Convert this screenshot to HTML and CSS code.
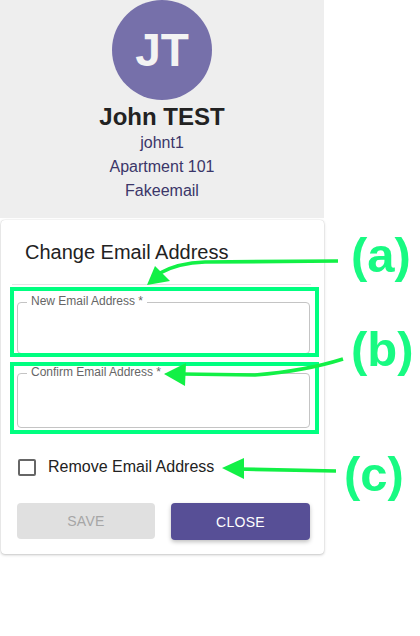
FILE: index.html
```html
<!DOCTYPE html>
<html lang="en">
<head>
<meta charset="utf-8">
<title>Change Email Address</title>
<link rel="stylesheet" href="styles.css">
</head>
<body>
<div class="page">
  <section class="profile">
    <div class="avatar">JT</div>
    <div class="name">John TEST</div>
    <div class="info">johnt1</div>
    <div class="info">Apartment 101</div>
    <div class="info">Fakeemail</div>
  </section>
  <section class="card">
    <h2 class="title">Change Email Address</h2>
    <div class="divider"></div>
    <div class="field field-new">
      <span class="field-label">New Email Address *</span>
    </div>
    <div class="field field-confirm">
      <span class="field-label">Confirm Email Address *</span>
    </div>
    <label class="check-row">
      <span class="checkbox"></span>
      <span class="check-text">Remove Email Address</span>
    </label>
    <div class="actions">
      <button class="btn btn-save" disabled>SAVE</button>
      <button class="btn btn-close">CLOSE</button>
    </div>
  </section>
</div>
<svg class="annotations" width="420" height="636" viewBox="0 0 420 636">
  <rect class="ann-box" x="12" y="289" width="305" height="66"/>
  <rect class="ann-box" x="12" y="364" width="305" height="68"/>
  <path class="ann-line" d="M338 261 L205 262 Q178 263 160 273"/>
  <polygon class="ann-head" points="147,285 155,266 170,281"/>
  <path class="ann-line" d="M343 359 Q305 371 255 375 L182 374"/>
  <polygon class="ann-head" points="164,374 186,363 185,386"/>
  <path class="ann-line" d="M336 471 L238 469"/>
  <polygon class="ann-head" points="222,468 244,458 244,479"/>
  <text class="ann-text" x="351" y="272">(a)</text>
  <text class="ann-text" x="351" y="366">(b)</text>
  <text class="ann-text" x="344" y="491">(c)</text>
</svg>
</body>
</html>
```
FILE: styles.css
```css
html, body {
  margin: 0;
  padding: 0;
  background: #ffffff;
}
body {
  position: relative;
  width: 420px;
  height: 636px;
  overflow: hidden;
  font-family: "Liberation Sans", Arial, sans-serif;
}
.page {
  width: 325px;
}
.profile {
  height: 218px;
  width: 324px;
  background: #eeeeee;
  display: flex;
  flex-direction: column;
  align-items: center;
}
.avatar {
  width: 100px;
  height: 100px;
  border-radius: 50%;
  background: #7670aa;
  color: #f3f3f3;
  font-size: 46px;
  font-weight: bold;
  display: flex;
  align-items: center;
  justify-content: center;
}
.name {
  margin-top: 3px;
  font-size: 24px;
  line-height: 28px;
  font-weight: bold;
  color: #222222;
}
.info {
  font-size: 16px;
  line-height: 24px;
  color: #3b3669;
}
.card {
  margin: 2px 0 0 1px;
  width: 323px;
  background: #ffffff;
  border-radius: 4px;
  box-shadow: 0 1px 3px rgba(0, 0, 0, 0.22), 0 0 1px rgba(0, 0, 0, 0.2);
  padding: 16px 0 14px;
}
.title {
  margin: 0;
  padding: 0 24px;
  font-size: 20px;
  line-height: 32px;
  font-weight: normal;
  color: #222222;
}
.divider {
  margin: 16px 13px 0 11px;
  height: 1px;
  background: #e4e4e4;
}
.field {
  position: relative;
  margin: 17px 14px 0 16px;
  height: 52px;
  box-sizing: border-box;
  border: 1px solid #c4c4c4;
  border-radius: 4px;
}
.field-confirm {
  margin-top: 19px;
  height: 55px;
}
.field-label {
  position: absolute;
  top: -9px;
  left: 9px;
  padding: 0 4px;
  background: #ffffff;
  font-size: 12px;
  line-height: 14px;
  color: #666666;
}
.check-row {
  display: flex;
  align-items: center;
  margin: 27px 0 0 17px;
  height: 24px;
}
.checkbox {
  width: 18px;
  height: 17px;
  box-sizing: border-box;
  border: 2px solid #666666;
  border-radius: 2px;
}
.check-text {
  margin-left: 12px;
  font-size: 16px;
  line-height: 24px;
  color: #222222;
}
.actions {
  display: flex;
  gap: 16px;
  margin: 24px 0 0 16px;
}
.btn {
  width: 138px;
  height: 36px;
  border: none;
  border-radius: 4px;
  font-family: "Liberation Sans", Arial, sans-serif;
  font-size: 14px;
  letter-spacing: 0.3px;
  padding: 0;
}
.btn-save {
  background: #e0e0e0;
  color: #a6a6a6;
}
.btn-close {
  width: 139px;
  height: 37px;
  background: #574f96;
  color: #ffffff;
  box-shadow: 0 2px 4px rgba(0, 0, 0, 0.25);
}
.annotations {
  position: absolute;
  top: 0;
  left: 0;
  pointer-events: none;
}
.ann-box {
  fill: none;
  stroke: #00ff80;
  stroke-width: 4;
}
.ann-line {
  fill: none;
  stroke: #12f046;
  stroke-width: 3.6;
}
.ann-head {
  fill: #12f046;
}
.ann-text {
  font-family: "Liberation Sans", Arial, sans-serif;
  font-weight: bold;
  font-size: 49px;
  fill: #18fa82;
}
```
